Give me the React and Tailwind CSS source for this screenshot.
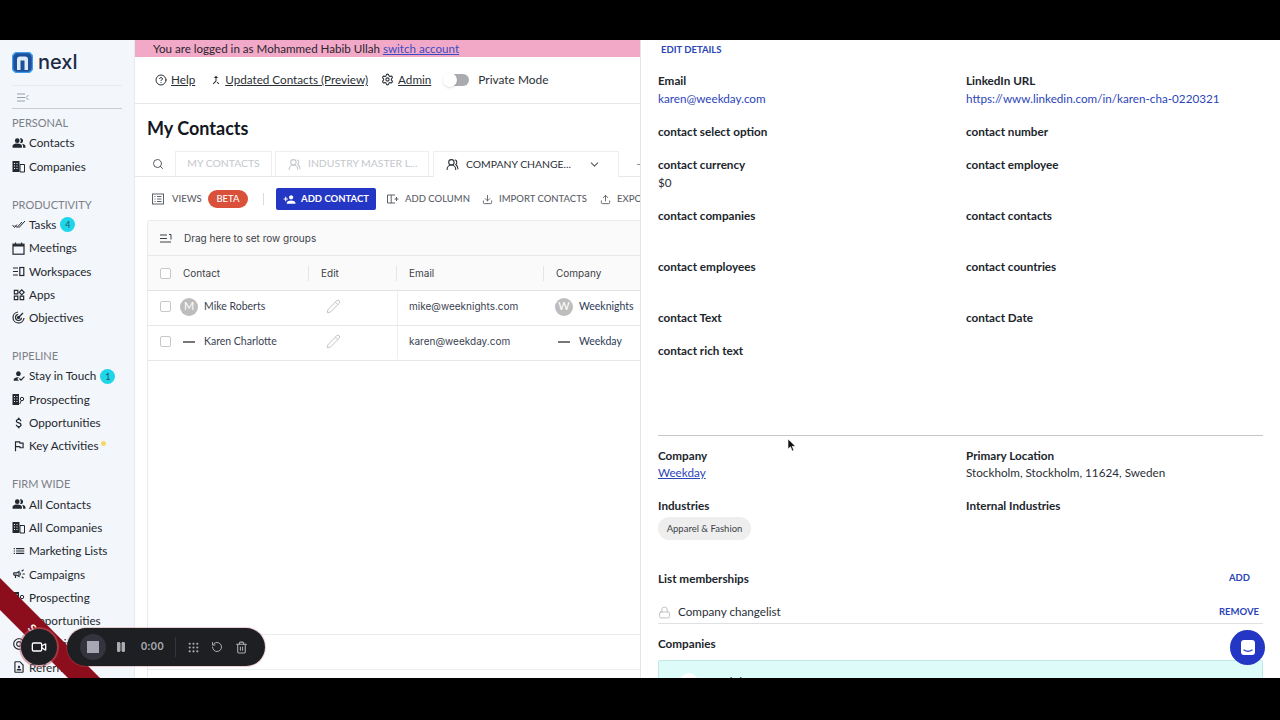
import {
  Search,
  ChevronDown,
  UsersRound,
  Pencil,
  Lock,
  Video,
  Pause,
  RotateCcw,
  Trash2,
  CircleHelp,
  Settings,
  Download,
  Upload,
  Grip,
  Plus,
} from "lucide-react";
import {
  MdPeopleAlt,
  MdOutlineWidgets,
  MdAttachMoney,
  MdOutlineFlag,
  MdOutlineList,
  MdOutlineCampaign,
  MdPersonAdd,
  MdHowToReg,
  MdCallMerge,
  MdOutlineContactPage,
  MdOutlineAlternateEmail,
} from "react-icons/md";

function BuildingIcon() {
  return (
    <svg width="13" height="13" viewBox="0 0 13 13" fill="#23282f">
      <path d="M0.500 1h7v11h-7z" />
      <path d="M8 4.500h4.500V12H8z" fill="none" stroke="#23282f" />
      <path d="M2 3h1v1H2zM4.500 3h1v1h-1zM2 5.500h1v1H2zM4.500 5.500h1v1h-1zM2 8h1v1H2zM4.500 8h1v1h-1zM9.500 6.500h1.500v1H9.500zM9.500 9h1.500v1H9.500z" fill="#f3f6fa" />
    </svg>
  );
}

function ProspectIcon() {
  return (
    <svg width="13" height="13" viewBox="0 0 13 13" fill="#23282f">
      <path d="M0.500 1h6.500v11H0.500z" />
      <path d="M2 3h1v1H2zM4.500 3h1v1h-1zM2 5.500h1v1H2zM4.500 5.500h1v1h-1zM2 8h1v1H2zM4.500 8h1v1h-1z" fill="#f3f6fa" />
      <circle cx="10" cy="6" r="1.700" fill="none" stroke="#23282f" />
      <path d="M9 8l-1.300 3" stroke="#23282f" fill="none" />
    </svg>
  );
}

function TasksIcon() {
  return (
    <svg width="14" height="13" viewBox="0 0 14 13" fill="none" stroke="#23282f" strokeWidth="1">
      <path d="M0.500 7l2 2.500L5 6.500" />
      <path d="M3 7.500l2 2L10 4" />
      <path d="M6 8.500l1 1L13 3" />
    </svg>
  );
}

function CalendarIcon() {
  return (
    <svg width="13" height="13" viewBox="0 0 13 13" fill="none" stroke="#23282f">
      <rect x="1" y="2.200" width="11" height="10" strokeWidth="1.200" />
      <path d="M1 3.500h11" strokeWidth="2" />
      <path d="M3.500 0.500v2M9.500 0.500v2" strokeWidth="1.200" />
    </svg>
  );
}

function WorkspaceIcon() {
  return (
    <svg width="13" height="13" viewBox="0 0 13 13" fill="none" stroke="#23282f" strokeWidth="1.200">
      <path d="M1 3h5M1 6.500h5M1 10h5" />
      <rect x="7.800" y="2.500" width="4" height="8" />
    </svg>
  );
}

function TargetIcon() {
  return (
    <svg width="13" height="13" viewBox="0 0 13 13" fill="none" stroke="#23282f" strokeWidth="1.200">
      <path d="M6 1a5.500 5.500 0 1 0 6 6" />
      <path d="M6.200 3.500a3 3 0 1 0 3.300 3.300" />
      <circle cx="6.500" cy="6.500" r="1" fill="#23282f" />
      <path d="M6.500 6.500L11 2" />
    </svg>
  );
}

function ViewsIcon() {
  return (
    <svg width="12" height="12" viewBox="0 0 12 12" fill="none" stroke="#5c6168" className="mr-[8px]">
      <rect x="0.500" y="1" width="11" height="10" />
      <path d="M2.500 3.500h1M5 3.500h4.500M2.500 6h1M5 6h4.500M2.500 8.500h1M5 8.500h4.500" />
    </svg>
  );
}

function AddColumnIcon() {
  return (
    <svg width="12" height="12" viewBox="0 0 12 12" fill="none" stroke="#5c6168" className="mr-[6px]">
      <path d="M8 2H0.500v8H8M4.200 2v8" />
      <path d="M9.500 4v4M7.500 6h4" />
    </svg>
  );
}

const sections = [
  {
    title: "PERSONAL",
    items: [
      { label: "Contacts", icon: <MdPeopleAlt size={14} /> },
      { label: "Companies", icon: <BuildingIcon /> },
    ],
  },
  {
    title: "PRODUCTIVITY",
    items: [
      { label: "Tasks", icon: <TasksIcon />, badge: "4" },
      { label: "Meetings", icon: <CalendarIcon /> },
      { label: "Workspaces", icon: <WorkspaceIcon /> },
      { label: "Apps", icon: <MdOutlineWidgets size={14} /> },
      { label: "Objectives", icon: <TargetIcon /> },
    ],
  },
  {
    title: "PIPELINE",
    items: [
      { label: "Stay in Touch", icon: <MdHowToReg size={14} />, badge: "1" },
      { label: "Prospecting", icon: <ProspectIcon /> },
      { label: "Opportunities", icon: <MdAttachMoney size={14} /> },
      { label: "Key Activities", icon: <MdOutlineFlag size={14} />, dot: true },
    ],
  },
  {
    title: "FIRM WIDE",
    items: [
      { label: "All Contacts", icon: <MdPeopleAlt size={14} /> },
      { label: "All Companies", icon: <BuildingIcon /> },
      { label: "Marketing Lists", icon: <MdOutlineList size={14} /> },
      { label: "Campaigns", icon: <MdOutlineCampaign size={14} /> },
      { label: "Prospecting", icon: <ProspectIcon /> },
      { label: "Opportunities", icon: <MdAttachMoney size={14} /> },
      { label: "Objectives", icon: <MdOutlineAlternateEmail size={14} /> },
      { label: "Referrals", icon: <MdOutlineContactPage size={14} /> },
    ],
  },
];

const detailRows = [
  { h: "h-[51px]", left: { label: "Email", value: "karen@weekday.com", link: true }, right: { label: "LinkedIn URL", value: "https://www.linkedin.com/in/karen-cha-0220321", link: true } },
  { h: "h-[33px]", left: { label: "contact select option" }, right: { label: "contact number" } },
  { h: "h-[51px]", left: { label: "contact currency", value: "$0" }, right: { label: "contact employee" } },
  { h: "h-[51px]", left: { label: "contact companies" }, right: { label: "contact contacts" } },
  { h: "h-[51px]", left: { label: "contact employees" }, right: { label: "contact countries" } },
  { h: "h-[33px]", left: { label: "contact Text" }, right: { label: "contact Date" } },
  { h: "h-[75px]", left: { label: "contact rich text" }, right: null },
];

function Sidebar() {
  return (
    <aside className="w-[135px] shrink-0 bg-[#f3f6fa] border-r border-[#e6e9ee] overflow-hidden">
      <div className="h-[46px] mx-3 flex items-center gap-[5px] border-b border-[#e8ebef] pb-[1px]">
        <svg width="21" height="21" viewBox="0 0 21 21">
          <rect x="0.500" y="0.500" width="20" height="20" rx="5" fill="#1e4f9c" />
          <rect x="0.500" y="0.500" width="20" height="20" rx="5" fill="none" stroke="#3f9be6" strokeWidth="1.500" />
          <path d="M5 18V7.500A3 3 0 0 1 8 4.500h5a3 3 0 0 1 3 3V18h-3.500V8.500H8.500V18z" fill="#dcebf9" />
        </svg>
        <span className="font-['Inter',sans-serif] text-[20px] leading-[26px] font-medium text-[#1c2b45]">nexl</span>
      </div>
      <div className="h-[23px] mx-3 flex items-center pl-[5px] border-b border-[#c9ccd1]">
        <svg width="12" height="9" viewBox="0 0 12 9" fill="none" stroke="#9aa0a8">
          <path d="M0 1h8M0 4.500h8M0 8h8M11.500 2L9 4.500 11.500 7" />
        </svg>
      </div>
      <div className="pl-3 pt-[5px]">
        {sections.map((s) => (
          <div key={s.title} className="mb-[17.500px]">
            <div className="h-[17.500px] text-[11px] leading-[18px] text-[#7b8088]">{s.title}</div>
            {s.items.map((item, i) => (
              <div key={item.label + i} className="h-[23.300px] flex items-center text-[11.700px] text-[#23282f]">
                <span className="w-[17px] shrink-0 flex items-center text-[#23282f]">{item.icon}</span>
                <span>{item.label}</span>
                {item.badge && (
                  <span className="ml-[4px] w-[15px] h-[15px] rounded-full bg-[#1fd5ea] text-[9px] leading-[15px] text-center text-[#24505a]">
                    {item.badge}
                  </span>
                )}
                {item.dot && <span className="ml-[3px] w-[5px] h-[5px] rounded-full bg-[#f5d76e] -mt-[6px]" />}
              </div>
            ))}
          </div>
        ))}
      </div>
    </aside>
  );
}

function Tab({ children, active, className }) {
  return (
    <div
      className={`flex items-center shrink-0 border border-b-0 border-[#eceef0] text-[10.400px] ${
        active ? "text-[#2a2f36] h-[26px] -mb-px bg-white" : "text-[#c4c7cb] h-[25px]"
      } ${className}`}
    >
      {children}
    </div>
  );
}

function Main() {
  return (
    <main className="w-[505px] shrink-0 bg-white flex flex-col overflow-hidden">
      <div className="h-[17px] shrink-0 bg-[#f2a9c7] pl-[18px] text-[11.600px] leading-[17px] text-[#2b2530] whitespace-nowrap">
        You are logged in as Mohammed Habib Ullah <span className="text-[#3a4bc4] underline">switch account</span>
      </div>
      <div className="h-[47px] shrink-0 border-b border-[#e5e7ea] pl-[20px] pb-[1px] flex items-center text-[11.700px] text-[#2a2f36] whitespace-nowrap">
        <CircleHelp size={12} className="mr-[4px]" />
        <span className="underline mr-[15px]">Help</span>
        <MdCallMerge size={12} className="mr-[3px]" />
        <span className="underline mr-[13px]">Updated Contacts (Preview)</span>
        <Settings size={13} className="mr-[4px]" />
        <span className="underline mr-[12px]">Admin</span>
        <span className="relative w-[26px] h-[12px] mr-[9px]">
          <span className="absolute right-0 top-0 w-[16px] h-[12px] rounded-r-full bg-[#a9abae]" />
          <span className="absolute left-0 -top-[1px] w-[14px] h-[14px] rounded-full bg-white shadow-sm" />
        </span>
        <span className="text-[11.900px]">Private Mode</span>
      </div>
      <h1 className="h-[48px] shrink-0 pl-[12px] flex items-center text-[18px] font-bold text-[#14181f]">My Contacts</h1>
      <div className="h-[25px] shrink-0 flex items-end border-b border-[#e5e7ea] whitespace-nowrap">
        <Search size={12} className="ml-[17px] mr-[11px] mb-[6px] text-[#555b63] shrink-0" />
        <Tab className="w-[97px] justify-center">MY CONTACTS</Tab>
        <Tab className="w-[154px] ml-[3px] pl-[12px]">
          <UsersRound size={13} className="mr-[7px]" />
          INDUSTRY MASTER L...
        </Tab>
        <Tab active className="w-[186px] ml-[4px] pl-[12px]">
          <UsersRound size={13} className="mr-[7px]" />
          COMPANY CHANGE...
          <ChevronDown size={13} className="ml-[17px] text-[#555b63]" />
        </Tab>
        <Plus size={11} className="ml-[16px] mb-[6px] text-[#8a8d91] shrink-0" />
      </div>
      <div className="h-[43px] shrink-0 flex items-center pl-[17px] pt-[1px] text-[9.500px] font-medium text-[#5c6168] whitespace-nowrap *:shrink-0">
        <ViewsIcon />
        <span className="mr-[6px] w-[30px]">VIEWS</span>
        <span className="w-[40px] h-[18px] rounded-full bg-[#d9513a] text-white text-[9.500px] leading-[18px] text-center">BETA</span>
        <span className="w-px h-[12px] bg-[#d8dadd] ml-[15px] mr-[12px]" />
        <span className="w-[100px] h-[22px] mr-[11px] rounded-[2px] bg-[#2336c4] text-white font-bold flex items-center justify-center gap-[5px]">
          <MdPersonAdd size={13} />
          ADD CONTACT
        </span>
        <AddColumnIcon />
        <span className="mr-[12px] w-[65px]">ADD COLUMN</span>
        <Download size={11} className="mr-[6px]" />
        <span className="mr-[12px] w-[89px]">IMPORT CONTACTS</span>
        <Upload size={11} className="mr-[6px]" />
        <span>EXPORT</span>
      </div>
      <div className="ml-[12px] flex-1 border-l border-t border-[#e8eaec] rounded-tl-[3px] bg-white flex flex-col">
        <div className="h-[35px] shrink-0 bg-[#fafafa] border-b border-[#e5e7ea] pl-[12px] flex items-center font-['Inter',sans-serif] text-[10px] text-[#3d4248]">
          <svg width="12" height="9" viewBox="0 0 12 9" fill="none" stroke="#3d4248" className="mr-[12px]">
            <path d="M0 1h7M0 4.500h7M0 8h11M9 0.500h2v5" />
          </svg>
          Drag here to set row groups
        </div>
        <div className="h-[35px] shrink-0 bg-[#fafafa] border-b border-[#e0e2e5] flex items-center font-['Inter',sans-serif] text-[10px] text-[#3d4248]">
          <Box />
          <span className="ml-[12px] w-[125px]">Contact</span>
          <span className="w-[88px] pl-[12px] border-l border-[#e4e6e8]">Edit</span>
          <span className="w-[147px] pl-[12px] border-l border-[#e4e6e8]">Email</span>
          <span className="pl-[12px] border-l border-[#e4e6e8]">Company</span>
        </div>
        <Row name="Mike Roberts" email="mike@weeknights.com" company="Weeknights" letter="M" companyLetter="W" />
        <Row name="Karen Charlotte" email="karen@weekday.com" company="Weekday" />
        <div className="flex-1 border-b border-[#e8eaec]" />
        <div className="h-[35px] shrink-0 border-b border-[#eceef0]" />
        <div className="h-[8px] shrink-0" />
      </div>
    </main>
  );
}

function Box() {
  return <span className="ml-[12px] w-[11px] h-[11px] shrink-0 rounded-[2px] border border-[#c6c8cb] bg-white" />;
}

function Avatar({ letter }) {
  if (!letter) {
    return (
      <span className="w-[18px] h-[18px] shrink-0 flex items-center justify-center">
        <span className="w-[12px] h-[2px] bg-[#777]" />
      </span>
    );
  }
  return (
    <span className="w-[18px] h-[18px] shrink-0 rounded-full bg-[#bdbdbd] text-white text-[11px] flex items-center justify-center">
      {letter}
    </span>
  );
}

function Row({ name, email, company, letter, companyLetter }) {
  return (
    <div className="h-[35px] shrink-0 border-b border-[#e5e7ea] flex items-center pb-[3px] text-[10.500px] text-[#3a4250] whitespace-nowrap">
      <Box />
      <span className="ml-[9px]">
        <Avatar letter={letter} />
      </span>
      <span className="ml-[6px] w-[105px]">{name}</span>
      <span className="w-[88px] flex items-center pl-[17px] text-[#bcbec1]">
        <Pencil size={15} strokeWidth={1.500} />
      </span>
      <span className="relative w-[147px] flex items-center pl-[12px] font-['Inter',sans-serif] text-[10px]">
        <span className="absolute left-0 -top-[10px] h-[35px] border-l border-[#eceef0]" />
        {email}
      </span>
      <span className="pl-[11px] flex items-center gap-[6px] text-[#2c3a55]">
        <Avatar letter={companyLetter} />
        {company}
      </span>
    </div>
  );
}

function Field({ field }) {
  if (!field) return <div />;
  return (
    <div>
      <div className="text-[11.700px] leading-[18px] font-bold text-[#20252b]">{field.label}</div>
      {field.value && (
        <div className={`text-[11.700px] leading-[18px] ${field.link ? "text-[#2b45b8]" : "text-[#2a2f36]"}`}>{field.value}</div>
      )}
    </div>
  );
}

function DetailPanel() {
  return (
    <section className="flex-1 bg-white border-l border-[#e3e5e8] pl-[17px] pr-[17px] overflow-hidden">
      <div className="h-[31px] pl-[3px] pt-[4px] text-[9.500px] leading-[12px] font-bold text-[#2b45b8]">EDIT DETAILS</div>
      {detailRows.map((r) => (
        <div key={r.left.label} className={`${r.h} grid grid-cols-[308px_1fr]`}>
          <Field field={r.left} />
          <Field field={r.right} />
        </div>
      ))}
      <div className="h-[20px] border-b border-[#c4c6c9]" />
      <div className="pt-[10px] h-[60px] grid grid-cols-[308px_1fr]">
        <div>
          <div className="text-[11.700px] leading-[18px] font-bold text-[#20252b]">Company</div>
          <div className="text-[11.700px] leading-[17px] text-[#2b45b8] underline">Weekday</div>
        </div>
        <div>
          <div className="text-[11.700px] leading-[18px] font-bold text-[#20252b]">Primary Location</div>
          <div className="text-[11.700px] leading-[17px] text-[#2a2f36]">Stockholm, Stockholm, 11624, Sweden</div>
        </div>
      </div>
      <div className="h-[65px] grid grid-cols-[308px_1fr]">
        <div>
          <div className="text-[11.700px] leading-[18px] font-bold text-[#20252b]">Industries</div>
          <span className="mt-[1px] inline-block h-[23px] w-[93px] rounded-full bg-[#eeeeee] text-center text-[9.500px] leading-[23px] text-[#3d4248]">
            Apparel &amp; Fashion
          </span>
        </div>
        <Field field={{ label: "Internal Industries" }} />
      </div>
      <div className="h-[35px] flex items-center justify-between pr-[13px]">
        <span className="text-[11.700px] font-bold text-[#20252b]">List memberships</span>
        <span className="text-[9.500px] font-bold text-[#2b45b8]">ADD</span>
      </div>
      <div className="h-[28px] pt-[5px] flex items-center border-b border-[#dfe1e4] pr-[4px]">
        <Lock size={13} strokeWidth={1.500} className="mr-[7px] text-[#b4b6b9]" />
        <span className="text-[11.700px] text-[#2a2f36]">Company changelist</span>
        <span className="ml-auto text-[9.500px] font-bold text-[#2b45b8]">REMOVE</span>
      </div>
      <div className="h-[36px] pt-[10px] text-[11.700px] leading-[18px] font-bold text-[#20252b]">Companies</div>
      <div className="relative h-[60px] rounded-t-[2px] border border-[#bfe9e6] bg-[#ddfbf8] pl-[47px] pt-[12px] text-[11.700px] leading-[16px] text-[#2a2f36]">
        <span className="absolute left-[21px] top-[12px] w-[18px] h-[18px] rounded-full bg-white" />
        Weekday
      </div>
    </section>
  );
}

function Recorder() {
  return (
    <>
      <svg width="100" height="100" viewBox="0 0 100 100" className="absolute left-0 top-[578px]">
        <polygon points="0,0 100,100 68,100 0,32" fill="#8c0d1b" />
      </svg>
      <span className="absolute left-[29px] top-[620px] rotate-45 text-[11px] font-bold text-white">S</span>
      <div className="absolute left-[21px] top-[629px] w-[36px] h-[36px] rounded-full bg-[#1e1f23] flex items-center justify-center text-white ring-2 ring-[#c0606b]/50">
        <Video size={16} />
      </div>
      <div className="absolute left-[67px] top-[628px] w-[198px] h-[38px] rounded-full bg-[#1e1f23] flex items-center text-[#a9abb0] ring-1 ring-[#c0606b]/30">
        <span className="ml-[13px] w-[26px] h-[26px] rounded-full bg-[#34343f] flex items-center justify-center">
          <span className="w-[12px] h-[12px] bg-[#a7a6b2]" />
        </span>
        <Pause size={12} fill="currentColor" className="ml-[9px]" />
        <span className="ml-[14px] text-[10.500px] font-bold tracking-[0.500px]">0:00</span>
        <span className="ml-[11px] w-px h-[20px] bg-[#35363b]" />
        <Grip size={13} className="ml-[11px]" />
        <RotateCcw size={12} className="ml-[11px]" />
        <Trash2 size={13} className="ml-[12px]" />
      </div>
      <div className="absolute left-[1230px] top-[630px] w-[35px] h-[35px] rounded-full bg-[#2336c4] flex items-center justify-center">
        <svg width="16" height="17" viewBox="0 0 16 17">
          <rect x="1" y="1" width="14" height="15" rx="3" fill="#fff" />
          <path d="M4 11c2.400 1.600 5.600 1.600 8 0" stroke="#2336c4" strokeWidth="1.300" fill="none" strokeLinecap="round" />
        </svg>
      </div>
      <svg width="10" height="14" viewBox="0 0 10 14" className="absolute left-[787px] top-[438px]">
        <path d="M1 1v10l2.500-2.200L5.200 13l1.600-.7L5.200 8.300H8.500z" fill="#111" stroke="#fff" strokeWidth="0.600" />
      </svg>
    </>
  );
}

export default function App() {
  return (
    <div className="relative w-[1280px] h-[720px] bg-black overflow-hidden font-['Lato',sans-serif]">
      <div className="h-[40px]" />
      <div className="h-[638px] flex overflow-hidden">
        <Sidebar />
        <Main />
        <DetailPanel />
      </div>
      <Recorder />
    </div>
  );
}
